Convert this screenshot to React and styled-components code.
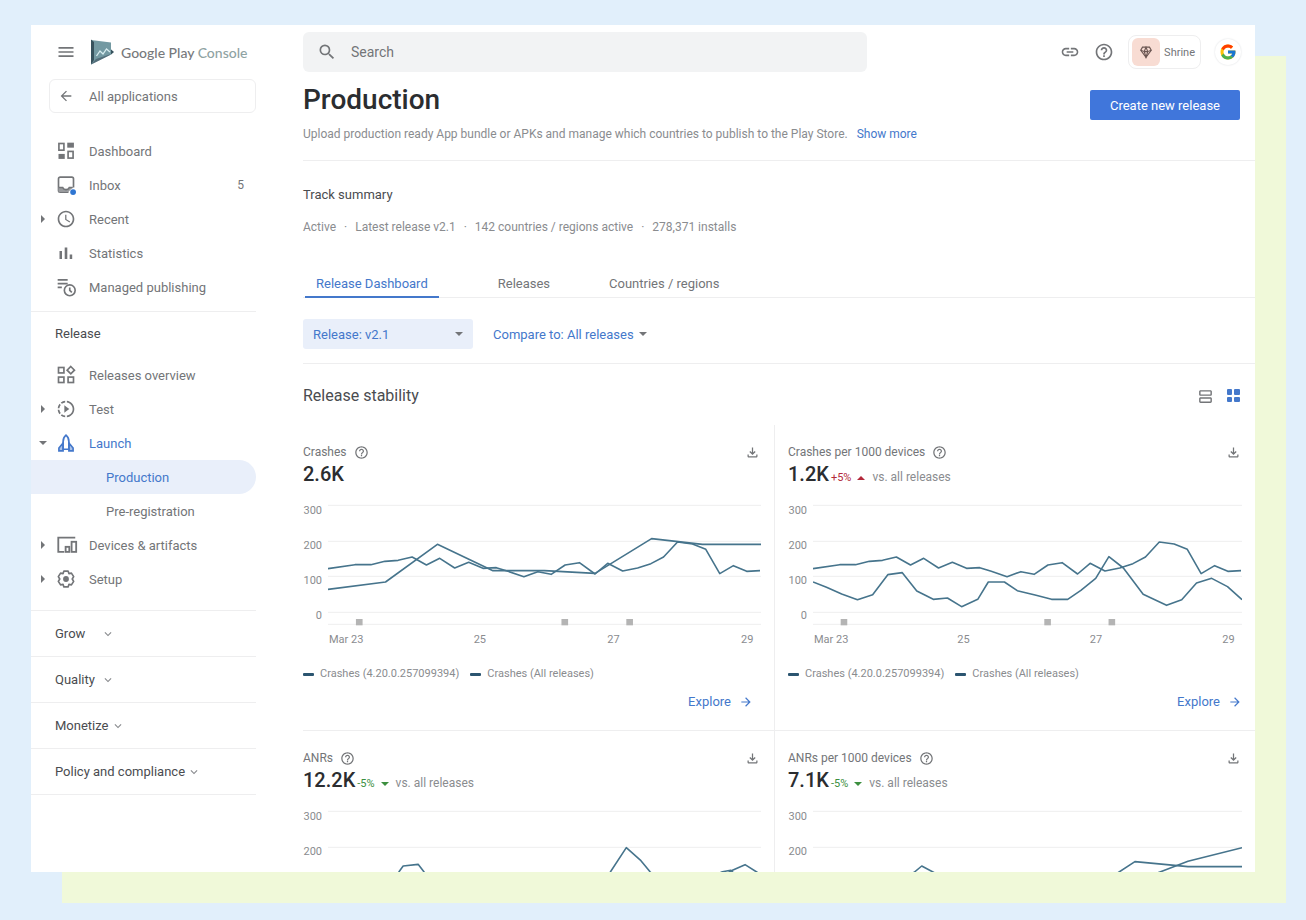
import React from "react";
import styled, { createGlobalStyle, css } from "styled-components";
import {
  MdMenu,
  MdArrowBack,
  MdArrowForward,
  MdAccessTime,
  MdLink,
  MdHelpOutline,
  MdSearch,
  MdOutlineSlowMotionVideo,
  MdOutlineViewAgenda,
  MdOutlineFileDownload,
  MdExpandMore,
} from "react-icons/md";
import { FcGoogle } from "react-icons/fc";

const color = {
  ink: "#2b2d30",
  heading: "#4a4c50",
  text: "#737578",
  muted: "#8a8c8f",
  line: "#eeeeef",
  blue: "#4478cb",
  paleBlue: "#e9effa",
  chart: "#46748c",
  red: "#b3293a",
  green: "#3c8f3f",
};

const GlobalStyle = createGlobalStyle`
  *, *::before, *::after { box-sizing: border-box; }
  body {
    margin: 0;
    background: #e1effb;
    color: ${color.text};
    font-family: Roboto, "Liberation Sans", sans-serif;
    font-size: 13px;
  }
  h1, h2, h3, p, ul, dl { margin: 0; padding: 0; }
  ul { list-style: none; }
  a { color: inherit; text-decoration: none; }
  button, input, select { font: inherit; color: inherit; border: 0; background: none; padding: 0; margin: 0; }
  button { cursor: pointer; }
  svg { display: block; flex: none; }
`;

/* ---------- Frame ---------- */

const Page = styled.div`
  height: 100vh;
  min-height: 480px;
  padding: 25px 51px 48px 31px;
`;

const Window = styled.div`
  display: grid;
  grid-template-columns: 225px minmax(0, 1fr);
  column-gap: 47px;
  height: 100%;
  padding-top: 7px;
  overflow: hidden;
  background: #fff;
  box-shadow: 31px 31px 0 #f0f9d9;
`;

/* ---------- Sidebar ---------- */

const Sidebar = styled.nav`
  min-width: 0;
`;

const Brand = styled.div`
  display: flex;
  align-items: center;
  height: 40px;
  padding-left: 25px;
`;

const IconButton = styled.button`
  display: grid;
  place-items: center;
  color: ${(p) => (p.$active ? color.blue : color.text)};
`;

const BrandLink = styled.a`
  display: flex;
  align-items: center;
  gap: 7px;
  margin-left: 14px;
  color: #77797c;
  font-family: Lato, Roboto, sans-serif;
  font-size: 14px;
  font-weight: 500;
  white-space: nowrap;

  span span { color: #8fa3a3; }
`;

const BackLink = styled.a`
  display: flex;
  align-items: center;
  gap: 15px;
  height: 34px;
  margin: 7px 0 21px 18px;
  padding-left: 8px;
  border: 1px solid ${color.line};
  border-radius: 6px;
`;

const NavList = styled.ul`
  display: flex;
  flex-direction: column;
`;

const NavLink = styled.a`
  display: flex;
  align-items: center;
  height: 34px;
  padding: 0 12px 0 8px;
  border-radius: 0 17px 17px 0;
  ${(p) => p.$nested && css`padding-left: 75px;`}
  ${(p) => p.$blue && css`color: ${color.blue};`}
  ${(p) => p.$selected && css`background: ${color.paleBlue};`}
`;

const CaretSlot = styled.span`
  width: 17px;
  color: ${color.text};
`;

const IconSlot = styled.span`
  width: 33px;
`;

const Count = styled.span`
  margin-left: auto;
  font-size: 12px;
`;

const GroupTitle = styled.h2`
  height: 47px;
  margin-top: 7px;
  padding-left: 24px;
  border-top: 1px solid ${color.line};
  color: ${color.heading};
  font-size: 13px;
  font-weight: 400;
  line-height: 44px;
`;

const Sections = styled.ul`
  margin-top: 14px;
  border-top: 1px solid ${color.line};
`;

const SectionToggle = styled.button`
  display: flex;
  align-items: center;
  gap: 2px;
  width: 100%;
  height: 46px;
  padding-left: 24px;
  border-bottom: 1px solid ${color.line};
  color: ${color.heading};
  text-align: left;

  svg { color: ${color.muted}; }
`;

const SectionName = styled.span`
  min-width: 44px;
`;

/* ---------- Main column ---------- */

const Main = styled.main`
  min-width: 0;
`;

const TopBar = styled.header`
  display: flex;
  align-items: center;
  gap: 14px;
  padding-right: 14px;
`;

const SearchBox = styled.label`
  display: flex;
  align-items: center;
  gap: 14px;
  flex: 0 1 564px;
  height: 40px;
  margin-right: auto;
  padding: 0 14px;
  border-radius: 6px;
  background: #f2f3f4;

  input {
    flex: 1;
    min-width: 0;
    outline: 0;
    font-size: 14px;
  }
  input::placeholder { color: ${color.text}; opacity: 1; }
`;

const AppChip = styled.button`
  display: flex;
  align-items: center;
  gap: 4px;
  height: 34px;
  padding: 0 5px 0 3px;
  border: 1px solid ${color.line};
  border-radius: 8px;
  font-size: 11px;
`;

const AppBadge = styled.span`
  display: grid;
  place-items: center;
  width: 28px;
  height: 28px;
  border-radius: 6px;
  background: #f8dcd3;
`;

const Avatar = styled.button`
  display: grid;
  place-items: center;
  width: 26px;
  height: 26px;
  border-radius: 50%;
  box-shadow: 0 0 2px #d8dadd;
`;

const PageHead = styled.section`
  display: flex;
  justify-content: space-between;
  padding: 8px 15px 16px 0;
  border-bottom: 1px solid ${color.line};
`;

const Title = styled.h1`
  color: ${color.ink};
  font-size: 28px;
  font-weight: 500;
  line-height: 40px;
`;

const Lead = styled.p`
  margin-top: 4px;
  color: ${color.muted};
  font-size: 12px;
  line-height: 20px;

  a { margin-left: 6px; color: ${color.blue}; }
`;

const PrimaryButton = styled.button`
  height: 30px;
  margin-top: 10px;
  padding: 0 20px;
  border-radius: 2px;
  background: #4076db;
  color: #fff;
  white-space: nowrap;
`;

const Summary = styled.section`
  padding-top: 24px;
`;

const SummaryTitle = styled.h2`
  color: ${color.heading};
  font-size: 13px;
  font-weight: 400;
  line-height: 20px;
`;

const Facts = styled.ul`
  display: flex;
  margin-top: 12px;
  color: ${color.muted};
  font-size: 12px;
  line-height: 20px;

  li + li::before { content: "·"; margin: 0 8px; }
`;

const Tabs = styled.div`
  display: flex;
  gap: 59px;
  height: 29px;
  margin-top: 32px;
  padding-left: 2px;
  border-bottom: 1px solid ${color.line};
`;

const Tab = styled.button`
  height: 29px;
  border-top: 1px solid transparent;
  border-bottom: 2px solid transparent;
  ${(p) =>
    p.$active &&
    css`
      padding: 0 11px;
      border-bottom-color: ${color.blue};
      color: ${color.blue};
    `}
`;

const Filters = styled.div`
  display: flex;
  gap: 20px;
  padding: 21px 0 14px;
  border-bottom: 1px solid ${color.line};
`;

const SelectField = styled.label`
  position: relative;
  display: flex;
  align-items: center;
  height: 30px;
  border-radius: 3px;
  color: ${color.blue};
  background: ${(p) => (p.$filled ? color.paleBlue : "transparent")};

  select {
    width: ${(p) => (p.$filled ? "170px" : "auto")};
    height: 100%;
    padding: 0 20px 0 ${(p) => (p.$filled ? 10 : 0)}px;
    appearance: none;
    cursor: pointer;
  }
  svg {
    position: absolute;
    right: ${(p) => (p.$filled ? 10 : 7)}px;
    color: ${color.text};
    pointer-events: none;
  }
`;

const StabilityHead = styled.div`
  display: flex;
  align-items: center;
  gap: 10px;
  margin-bottom: 17px;
  padding: 20px 13px 0 0;
`;

const StabilityTitle = styled.h2`
  margin-right: auto;
  color: ${color.heading};
  font-size: 16px;
  font-weight: 400;
  line-height: 24px;
`;

const CardGrid = styled.div`
  display: grid;
  grid-template-columns: 59fr 60fr;
`;

/* ---------- Metric card ---------- */

const Card = styled.article`
  min-width: 0;
  padding: 17px 13px 18px;
  border-bottom: 1px solid ${color.line};

  &:nth-child(odd) {
    padding-left: 0;
    border-right: 1px solid ${color.line};
  }
`;

const CardHead = styled.div`
  display: flex;
  align-items: center;
  gap: 7px;
  height: 20px;

  > :last-child { margin: 0 1px 0 auto; }
`;

const CardTitle = styled.h3`
  font-size: 12px;
  font-weight: 400;
`;

const Figures = styled.p`
  display: flex;
  align-items: baseline;
  height: 24px;
  font-size: 11px;
  line-height: 24px;
`;

const Figure = styled.strong`
  color: ${color.ink};
  font-size: 20px;
  font-weight: 500;
`;

const Delta = styled.span`
  display: flex;
  align-items: center;
  gap: 6px;
  margin: 0 7px 0 2px;
  color: ${(p) => (p.$up ? color.red : color.green)};
`;

const Versus = styled.span`
  color: ${color.muted};
  font-size: 12px;
`;

const Plot = styled.div`
  display: grid;
  grid-template-columns: 25px minmax(0, 1fr);
  margin-top: 7px;
`;

const YAxis = styled.div`
  display: flex;
  flex-direction: column;
  padding-right: 6px;
  color: ${color.muted};
  font-size: 11px;
  line-height: 35px;
  text-align: right;
`;

const PlotArea = styled.svg`
  width: 100%;
  height: 140px;
  fill: none;

  line, polyline { vector-effect: non-scaling-stroke; }
  line { stroke: ${color.line}; }
  polyline { stroke: ${color.chart}; stroke-width: 1.6px; stroke-linejoin: round; }
  rect { fill: #b4b4b4; }
`;

const XAxis = styled.div`
  display: grid;
  grid-column: 2;
  grid-template-columns: 145fr 134fr 134fr 20fr;
  padding-left: 1px;
  color: ${color.muted};
  font-size: 11px;
  line-height: 14px;
`;

const Legend = styled.ul`
  display: flex;
  gap: 11px;
  margin-top: 19px;
  color: ${color.muted};
  font-size: 11px;
  line-height: 16px;

  li { display: flex; align-items: center; gap: 6px; }
  li::before {
    content: "";
    width: 11px;
    height: 3px;
    border-radius: 1px;
    background: #2b5570;
  }
`;

const ExploreLink = styled.a`
  display: flex;
  align-items: center;
  justify-content: flex-end;
  gap: 8px;
  margin-top: 10px;
  color: ${color.blue};
  line-height: 20px;

  ${Card}:nth-child(odd) & { padding-right: 8px; }
`;

/* ---------- Icons ---------- */

const Stroke = ({ size = 20, width = 2, children }) => (
  <svg width={size} height={size} viewBox="0 0 24 24" fill="none" stroke="currentColor" strokeWidth={width} aria-hidden="true">
    {children}
  </svg>
);

const Triangle = ({ dir, size = 8 }) => {
  const points = { right: "2,0 6,4 2,8", down: "0,2 8,2 4,6", up: "0,6 8,6 4,2" };
  return (
    <svg width={size} height={size} viewBox="0 0 8 8" fill="currentColor" aria-hidden="true">
      <polygon points={points[dir]} />
    </svg>
  );
};

const DashboardIcon = () => (
  <Stroke>
    <rect x="3.5" y="3" width="6" height="8" />
    <rect x="3" y="15.5" width="7.5" height="6" fill="currentColor" stroke="none" />
    <rect x="13.5" y="2" width="8" height="6" fill="currentColor" stroke="none" />
    <rect x="14.5" y="12.5" width="6" height="8" />
  </Stroke>
);

const InboxIcon = () => (
  <Stroke>
    <path d="M15 20.5H5a2 2 0 0 1-2-2V4.500a2 2 0 0 1 2-2h14a2 2 0 0 1 2 2V15" />
    <path d="M3 14.500h5c.8 2 2 3 4 3s3.200-1 4-3h4V15l-5 5H3z" fill="#9a9c9f" stroke="none" />
    <path d="M3 15h5c.8 1.800 2 2.500 4 2.500s3.200-.7 4-2.500h4" />
    <circle cx="20.500" cy="20.500" r="3.500" fill="#2f76d2" stroke="none" />
  </Stroke>
);

const StatisticsIcon = () => (
  <svg width="20" height="20" viewBox="0 0 20 20" fill="currentColor" aria-hidden="true">
    <rect x="3.500" y="8" width="2.500" height="8" />
    <rect x="8.700" y="4.500" width="2.600" height="11.500" />
    <rect x="13.700" y="11.500" width="2.500" height="4.500" />
  </svg>
);

const PublishingIcon = () => (
  <Stroke>
    <path d="M2 3.500h12M2 8h12M2 12.500h5" />
    <circle cx="16.500" cy="16" r="6.500" />
    <path d="M16.500 12.500V16l2.500 2.500" />
  </Stroke>
);

const OverviewIcon = () => (
  <Stroke>
    <rect x="3" y="3" width="6.500" height="6.500" />
    <rect x="3" y="14.500" width="6.500" height="6.500" />
    <rect x="14.500" y="14.500" width="6.500" height="6.500" />
    <path d="M17.750 1.800l4.400 4.400-4.400 4.400-4.400-4.400z" />
  </Stroke>
);

const LaunchIcon = () => (
  <Stroke>
    <path d="M12 2.500c-2.500 2-3.500 5-3.500 8v9h7v-9c0-3-1-6-3.500-8z" />
    <path d="M8.500 12L3.500 18v3.500H8.500zM15.500 12l5 6v3.500H15.500z" fill="currentColor" fillOpacity=".45" />
  </Stroke>
);

const DevicesIcon = () => (
  <Stroke size={22}>
    <path d="M21 4H2.500v15.500H9" />
    <rect x="10.500" y="14" width="4" height="5.500" />
    <rect x="17" y="8.500" width="5" height="11" />
  </Stroke>
);

const SetupIcon = () => (
  <Stroke>
    <path d="M9.500 2.500h5l1 3 3-.6 2.700 4.200L19.500 12l1.700 2.900-2.700 4.200-3-.6-1 3h-5l-1-3-3 .6-2.700-4.200L4.500 12 2.800 9.100l2.700-4.200 3 .6z" strokeLinejoin="round" />
    <circle cx="12" cy="12" r="3.500" fill="currentColor" stroke="none" />
  </Stroke>
);

const GridIcon = () => (
  <svg width="18" height="18" viewBox="0 0 18 18" fill="currentColor" aria-hidden="true">
    <rect x="3" y="2" width="5" height="6" rx="1" />
    <rect x="10" y="2" width="6" height="6" rx="1" />
    <rect x="3" y="10" width="5" height="5" rx="1" />
    <rect x="10" y="10" width="6" height="5" rx="1" />
  </svg>
);

const ShrineIcon = () => (
  <svg width="14" height="14" viewBox="0 0 16 16" fill="none" stroke="#6b5652" strokeWidth="1.300" aria-hidden="true">
    <path d="M4 2.500h8l2 3.500-6 8-6-8z" />
    <path d="M2 6l4 1.500L8 14l2-6.500L14 6M6 7.500L8 2.500l2 5z" />
  </svg>
);

const ConsoleLogo = () => (
  <svg width="24" height="26" viewBox="0 0 24 26" aria-hidden="true">
    <path d="M1 1l20 2.500v7L23.500 13 21 15.500 1 25.500z" fill="#7399a2" />
    <path d="M1 25.500L6 20l15-5-1 1z" fill="#546e7a" />
    <path d="M1 .5l3 2.500v18L1 25.500z" fill="#37525d" />
    <path d="M6.500 17l3.500-5 3 3 3.500-5 3.500 3" fill="none" stroke="#d7ecef" strokeWidth="1.300" />
    <path d="M21 10.500l3 2.500-3 2.500z" fill="#37525d" />
  </svg>
);

/* ---------- Data ---------- */

const mainNav = [
  { label: "Dashboard", icon: <DashboardIcon /> },
  { label: "Inbox", icon: <InboxIcon />, count: 5 },
  { label: "Recent", icon: <MdAccessTime size={20} />, caret: "right" },
  { label: "Statistics", icon: <StatisticsIcon /> },
  { label: "Managed publishing", icon: <PublishingIcon /> },
];

const releaseNav = [
  { label: "Releases overview", icon: <OverviewIcon /> },
  { label: "Test", icon: <MdOutlineSlowMotionVideo size={20} />, caret: "right" },
  { label: "Launch", icon: <LaunchIcon />, caret: "down", blue: true },
  { label: "Production", nested: true, selected: true, blue: true },
  { label: "Pre-registration", nested: true },
  { label: "Devices & artifacts", icon: <DevicesIcon />, caret: "right" },
  { label: "Setup", icon: <SetupIcon />, caret: "right" },
];

const sections = ["Grow", "Quality", "Monetize", "Policy and compliance"];

const allReleases =
  "0,227 81,215 129,215 171,205 211,202 253,192 296,216 336,196 381,225 423,208 466,226 506,224 541,235 589,251 631,236 671,244 713,216 756,209 803,243 841,211 886,234 931,225 971,212 1009,192 1051,147 1096,153 1136,169 1178,242 1219,218 1259,235 1299,233";

const metrics = [
  {
    name: "Crashes",
    value: "2.6K",
    series: [allReleases, "0,289 173,267 329,154 496,233 651,233 803,241 973,137 1126,154 1302,154"],
  },
  {
    name: "Crashes per 1000 devices",
    value: "1.2K",
    delta: "+5%",
    up: true,
    series: [
      allReleases,
      "0,267 41,283 87,303 135,320 181,305 227,245 271,239 315,294 365,319 408,315 451,341 500,319 532,267 581,267 620,293 674,306 724,319 773,319 813,292 858,256 898,191 942,225 1002,304 1073,337 1119,320 1164,270 1210,256 1258,281 1302,320",
    ],
  },
  {
    name: "ANRs",
    value: "12.2K",
    delta: "-5%",
    series: [
      "0,300 120,290 180,260 213,219 226,201 271,196 289,219 340,280 520,310 780,300 849,219 897,146 941,185 969,219 1040,290 1120,250 1186,218 1211,214 1240,240 1302,260",
      "0,260 300,290 700,270 1100,290 1211,216 1254,197 1289,219 1302,228",
    ],
  },
  {
    name: "ANRs per 1000 devices",
    value: "7.1K",
    delta: "-5%",
    series: [
      "0,280 200,300 308,219 330,201 364,219 500,290 800,300 929,219 977,188 1138,203 1302,203",
      "0,320 400,270 800,310 1053,219 1138,187 1302,146",
    ],
  },
];

/* ---------- Components ---------- */

function NavItems({ items }) {
  return (
    <NavList>
      {items.map(({ label, icon, caret, count, nested, selected, blue }) => (
        <li key={label}>
          <NavLink href="#" $nested={nested} $selected={selected} $blue={blue} aria-current={selected ? "page" : undefined}>
            {!nested && <CaretSlot>{caret && <Triangle dir={caret} />}</CaretSlot>}
            {!nested && <IconSlot>{icon}</IconSlot>}
            {label}
            {count && <Count>{count}</Count>}
          </NavLink>
        </li>
      ))}
    </NavList>
  );
}

function MetricCard({ name, value, delta, up, series }) {
  return (
    <Card>
      <CardHead>
        <CardTitle>{name}</CardTitle>
        <IconButton aria-label={`About ${name}`}>
          <MdHelpOutline size={15} />
        </IconButton>
        <IconButton aria-label={`Download ${name}`}>
          <MdOutlineFileDownload size={15} />
        </IconButton>
      </CardHead>
      <Figures>
        <Figure>{value}</Figure>
        {delta && (
          <>
            <Delta $up={up}>
              {delta}
              <Triangle dir={up ? "up" : "down"} />
            </Delta>
            <Versus>vs. all releases</Versus>
          </>
        )}
      </Figures>
      <Plot>
        <YAxis>
          {[300, 200, 100, 0].map((tick) => (
            <span key={tick}>{tick}</span>
          ))}
        </YAxis>
        <PlotArea viewBox="0 0 1302 420" preserveAspectRatio="none" role="img" aria-label={`${name} chart`}>
          {[37, 145, 250, 358, 394].map((y) => (
            <line key={y} x1="0" x2="1302" y1={y} y2={y} />
          ))}
          {[84, 702, 897].map((x) => (
            <rect key={x} x={x} y="378" width="20" height="19" />
          ))}
          {series.map((points) => (
            <polyline key={points} points={points} />
          ))}
        </PlotArea>
        <XAxis>
          {["Mar 23", "25", "27", "29"].map((tick) => (
            <span key={tick}>{tick}</span>
          ))}
        </XAxis>
      </Plot>
      <Legend>
        <li>Crashes (4.20.0.257099394)</li>
        <li>Crashes (All releases)</li>
      </Legend>
      <ExploreLink href="#">
        Explore
        <MdArrowForward size={14} />
      </ExploreLink>
    </Card>
  );
}

export default function App() {
  return (
    <>
      <GlobalStyle />
      <Page>
        <Window>
          <Sidebar>
            <Brand>
              <IconButton aria-label="Menu">
                <MdMenu size={20} />
              </IconButton>
              <BrandLink href="#">
                <ConsoleLogo />
                <span>
                  Google Play <span>Console</span>
                </span>
              </BrandLink>
            </Brand>
            <BackLink href="#">
              <MdArrowBack size={16} />
              All applications
            </BackLink>
            <NavItems items={mainNav} />
            <GroupTitle>Release</GroupTitle>
            <NavItems items={releaseNav} />
            <Sections>
              {sections.map((name) => (
                <li key={name}>
                  <SectionToggle>
                    <SectionName>{name}</SectionName>
                    <MdExpandMore size={14} />
                  </SectionToggle>
                </li>
              ))}
            </Sections>
          </Sidebar>

          <Main>
            <TopBar>
              <SearchBox>
                <MdSearch size={20} />
                <input type="search" placeholder="Search" aria-label="Search" />
              </SearchBox>
              <IconButton aria-label="Copy link">
                <MdLink size={20} />
              </IconButton>
              <IconButton aria-label="Help">
                <MdHelpOutline size={20} />
              </IconButton>
              <AppChip>
                <AppBadge>
                  <ShrineIcon />
                </AppBadge>
                Shrine
              </AppChip>
              <Avatar aria-label="Account">
                <FcGoogle size={18} />
              </Avatar>
            </TopBar>

            <PageHead>
              <div>
                <Title>Production</Title>
                <Lead>
                  Upload production ready App bundle or APKs and manage which countries to publish to the Play Store.{" "}
                  <a href="#">Show more</a>
                </Lead>
              </div>
              <PrimaryButton>Create new release</PrimaryButton>
            </PageHead>

            <Summary>
              <SummaryTitle>Track summary</SummaryTitle>
              <Facts>
                <li>Active</li>
                <li>Latest release v2.1</li>
                <li>142 countries / regions active</li>
                <li>278,371 installs</li>
              </Facts>
              <Tabs role="tablist">
                <Tab role="tab" aria-selected="true" $active>
                  Release Dashboard
                </Tab>
                <Tab role="tab">Releases</Tab>
                <Tab role="tab">Countries / regions</Tab>
              </Tabs>
            </Summary>

            <Filters>
              <SelectField $filled>
                <select aria-label="Release">
                  <option>Release: v2.1</option>
                </select>
                <Triangle dir="down" />
              </SelectField>
              <SelectField>
                <select aria-label="Compare to">
                  <option>Compare to: All releases</option>
                </select>
                <Triangle dir="down" />
              </SelectField>
            </Filters>

            <StabilityHead>
              <StabilityTitle>Release stability</StabilityTitle>
              <IconButton aria-label="List view">
                <MdOutlineViewAgenda size={17} />
              </IconButton>
              <IconButton aria-label="Grid view" $active>
                <GridIcon />
              </IconButton>
            </StabilityHead>
            <CardGrid>
              {metrics.map((metric) => (
                <MetricCard key={metric.name} {...metric} />
              ))}
            </CardGrid>
          </Main>
        </Window>
      </Page>
    </>
  );
}
